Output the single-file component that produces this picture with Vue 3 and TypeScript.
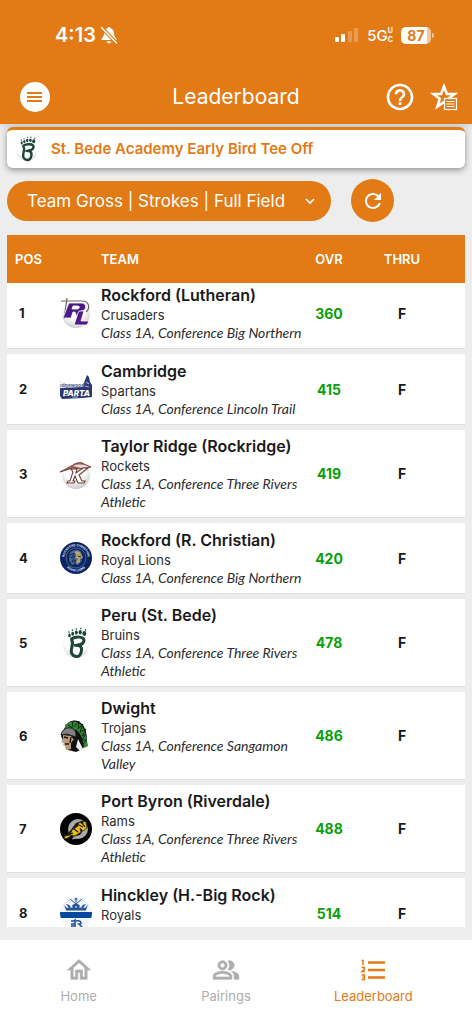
<script setup lang="ts">
import { onMounted, ref } from 'vue'

type Logo = 'rl' | 'spartans' | 'rocket' | 'lions' | 'bruins' | 'trojan' | 'rams' | 'royals'

interface Team {
  pos: number
  name: string
  mascot: string
  detail?: string
  score: number
  logo: Logo
}

const teams: Team[] = [
  { pos: 1, name: 'Rockford (Lutheran)', mascot: 'Crusaders', detail: 'Class 1A, Conference Big Northern', score: 360, logo: 'rl' },
  { pos: 2, name: 'Cambridge', mascot: 'Spartans', detail: 'Class 1A, Conference Lincoln Trail', score: 415, logo: 'spartans' },
  { pos: 3, name: 'Taylor Ridge (Rockridge)', mascot: 'Rockets', detail: 'Class 1A, Conference Three Rivers Athletic', score: 419, logo: 'rocket' },
  { pos: 4, name: 'Rockford (R. Christian)', mascot: 'Royal Lions', detail: 'Class 1A, Conference Big Northern', score: 420, logo: 'lions' },
  { pos: 5, name: 'Peru (St. Bede)', mascot: 'Bruins', detail: 'Class 1A, Conference Three Rivers Athletic', score: 478, logo: 'bruins' },
  { pos: 6, name: 'Dwight', mascot: 'Trojans', detail: 'Class 1A, Conference Sangamon Valley', score: 486, logo: 'trojan' },
  { pos: 7, name: 'Port Byron (Riverdale)', mascot: 'Rams', detail: 'Class 1A, Conference Three Rivers Athletic', score: 488, logo: 'rams' },
  { pos: 8, name: 'Hinckley (H.-Big Rock)', mascot: 'Royals', score: 514, logo: 'royals' },
]

const view = ref('Team Gross | Strokes | Full Field')
const list = ref<HTMLElement | null>(null)

onMounted(() => {
  if (list.value) list.value.scrollTop = 17
})
</script>

<template>
  <div class="screen">
    <svg class="defs" width="0" height="0" aria-hidden="true">
      <defs>
        <radialGradient id="ball" cx="0.45" cy="0.3" r="0.75">
          <stop offset="0.5" stop-color="#fff" />
          <stop offset="1" stop-color="#c4c4c4" />
        </radialGradient>
        <radialGradient id="soft-ball" cx="0.5" cy="0.25" r="0.8">
          <stop offset="0.6" stop-color="#fff" />
          <stop offset="1" stop-color="#d6d6d6" />
        </radialGradient>
        <clipPath id="disc"><circle cx="16" cy="16" r="16" /></clipPath>
        <symbol id="bear-paw" viewBox="0 0 32 32">
          <circle cx="16" cy="18" r="13" fill="url(#soft-ball)" />
          <g fill="#1e4536">
            <ellipse cx="9.500" cy="8.500" rx="1.300" ry="1.900" />
            <ellipse cx="12.700" cy="6.800" rx="1.400" ry="2" />
            <ellipse cx="16.300" cy="5.600" rx="1.500" ry="2.100" />
            <ellipse cx="20.200" cy="5.200" rx="1.600" ry="2.200" />
            <ellipse cx="24.300" cy="6.500" rx="1.900" ry="2.400" />
            <path d="M8 5.500l1-2 .6 2.500zM11.500 3.700l1-2 .6 2.500zM15.500 2.500l1-2 .6 2.500zM20 2l1-2 .6 2.500zM24.500 3.500l1.500-2 .2 2.500z" />
          </g>
          <path d="M11.500 12c4-3 13-2.500 12.500 1.500-.3 3-3.500 4.500-7 5 3-.6 5 1.500 4.500 5-.5 4-2.500 6.500-5.500 6-4-.5-5.500-4-4.500-8 .8-3 2-5.500 0-9.500z" fill="#fff" stroke="#1e4536" stroke-width="3" stroke-linejoin="round" />
          <path d="M14 18.500c2-.5 5-.5 7-1.500" fill="none" stroke="#1e4536" stroke-width="2.500" />
        </symbol>
      </defs>
    </svg>

    <header class="top">
      <div class="status">
        <div class="clock">
          <span>4:13</span>
          <svg width="18" height="18" viewBox="0 0 18 18" aria-hidden="true">
            <path d="M9 1c-.9 0-1.400.6-1.500 1.300C5 3 4 5 4 7.500 4 10.500 2.500 11.500 1.500 13v1h15v-1c-1-1.500-2.500-2.500-2.500-5.500C14 5 13 3 10.500 2.300 10.400 1.600 9.900 1 9 1zM6.800 15.200c.2 1.300 1 2.100 2.200 2.100s2-.8 2.200-2.100z" fill="#fff" />
            <path d="M1.500 1.500L16.500 17" stroke="#e27a16" stroke-width="3.600" />
            <path d="M1.500 1.500L16.500 17" stroke="#fff" stroke-width="1.400" stroke-linecap="round" />
          </svg>
        </div>
        <div class="signals">
          <svg width="24" height="16" viewBox="0 0 24 16" fill="#fff" aria-hidden="true">
            <rect x="0" y="10" width="4" height="5" rx="1" />
            <rect x="6" y="7" width="4" height="8" rx="1" />
            <rect x="13" y="4" width="4" height="11" rx="1" opacity="0.25" />
            <rect x="19" y="1" width="4" height="14" rx="1" opacity="0.25" />
          </svg>
          <span class="network">5G<span class="uc"><span>U</span><span>C</span></span></span>
          <span class="battery">87</span>
          <span class="battery-tip"></span>
        </div>
      </div>
      <div class="bar">
        <button class="menu" aria-label="Menu">
          <svg width="16" height="12" viewBox="0 0 16 12" aria-hidden="true"><path d="M0 2h15M0 6h15M0 10h15" stroke="#e27a16" stroke-width="1.800" /></svg>
        </button>
        <h1>Leaderboard</h1>
        <div class="actions">
          <button class="plain" aria-label="Help">
            <svg width="32" height="32" viewBox="0 0 24 24" fill="#fff" aria-hidden="true"><path d="M11 18h2v-2h-2v2zm1-16C6.480 2 2 6.480 2 12s4.480 10 10 10 10-4.480 10-10S17.520 2 12 2zm0 18c-4.410 0-8-3.590-8-8s3.590-8 8-8 8 3.590 8 8-3.590 8-8 8zm0-14c-2.210 0-4 1.790-4 4h2c0-1.100.9-2 2-2s2 .9 2 2c0 2-3 1.750-3 5h2c0-2.250 3-2.500 3-5 0-2.210-1.790-4-4-4z" /></svg>
          </button>
          <button class="plain" aria-label="Favorites list">
            <svg width="28" height="28" viewBox="0 0 28 28" aria-hidden="true">
              <path d="M14 3.500l2.900 7.500h7.600l-6.200 4.800 2.300 7.700-6.600-4.500-6.600 4.500 2.300-7.700L3.500 11h7.600z" fill="none" stroke="#fff" stroke-width="2.600" />
              <rect x="14.500" y="15.500" width="12" height="11" fill="#e27a16" stroke="#fff" stroke-width="1.200" />
              <path d="M16.500 18.500h8M16.500 21h8M16.500 23.500h8" stroke="#fff" stroke-width="1.200" />
            </svg>
          </button>
        </div>
      </div>
    </header>

    <main class="content">
      <section class="event">
        <svg width="24" height="26" viewBox="2 0 28 32" aria-hidden="true"><use href="#bear-paw" width="32" height="32" /></svg>
        <h2>St. Bede Academy Early Bird Tee Off</h2>
      </section>

      <div class="filters">
        <div class="picker">
          <select v-model="view" aria-label="Leaderboard view">
            <option>Team Gross | Strokes | Full Field</option>
          </select>
          <svg class="chevron" width="10" height="8" viewBox="0 0 10 8" aria-hidden="true"><path d="M1 2l4 4 4-4" fill="none" stroke="#fff" stroke-width="1.600" /></svg>
        </div>
        <button class="refresh" aria-label="Refresh">
          <svg width="24" height="24" viewBox="0 0 24 24" fill="#fff" aria-hidden="true"><path d="M17.650 6.350C16.200 4.900 14.210 4 12 4c-4.420 0-7.990 3.580-7.990 8s3.570 8 7.990 8c3.730 0 6.840-2.550 7.730-6h-2.080c-.82 2.330-3.040 4-5.650 4-3.310 0-6-2.690-6-6s2.690-6 6-6c1.660 0 3.140.69 4.220 1.780L13 11h7V4l-2.350 2.350z" /></svg>
        </button>
      </div>

      <div ref="list" class="list">
        <table>
          <thead>
            <tr>
              <th class="pos">POS</th>
              <th class="logo-col"></th>
              <th class="team">TEAM</th>
              <th class="ovr">OVR</th>
              <th class="thru">THRU</th>
            </tr>
          </thead>
          <tbody>
            <tr v-for="t in teams" :key="t.pos">
              <td class="pos">{{ t.pos }}</td>
              <td class="logo-col">
                <svg width="32" height="32" viewBox="0 0 32 32" aria-hidden="true">
                  <g v-if="t.logo === 'rl'">
                    <circle cx="16" cy="17" r="14" fill="url(#ball)" />
                    <path d="M7 1L4 22M1 4h21c8 0 8 8 4 11" fill="none" stroke="#666" stroke-width="1.200" />
                    <path d="M9 6h13c5 0 5 8-1 8l1 6h-5l-2-5h-2l-2 6H3L8 8zM13 9l-1 3h5c3 0 3-3 1-3z" fill="#4c1a86" stroke="#fff" stroke-width="0.800" fill-rule="evenodd" />
                    <path d="M19 14h5l-3 10h8l-2 4H14l4-12z" fill="#4c1a86" stroke="#fff" stroke-width="0.800" />
                  </g>
                  <g v-else-if="t.logo === 'spartans'">
                    <path d="M23 13l2-6 2-5 2 2 1 5 2 3v5l-9-2z" fill="#283a70" />
                    <path d="M26 9l3 2M25 13l4 1" stroke="#a6adc7" stroke-width="1.200" />
                    <text x="0" y="14" class="mark ridge">idgewood</text>
                    <path d="M0 15l22-1 10 2v8l-9 1-21 1-2-3z" fill="#283a70" />
                    <text x="3" y="23" class="mark sparta">PARTA</text>
                    <path d="M3 23l5-1M12 24h6M21 23l6-1" stroke="#fff" stroke-width="0.600" />
                  </g>
                  <g v-else-if="t.logo === 'rocket'">
                    <circle cx="16" cy="17" r="14" fill="url(#ball)" />
                    <path d="M0 14l13-7c4-3 9-3 11-1l7 3-10 2-8-1z" fill="#b1665f" stroke="#602f2d" stroke-width="0.800" />
                    <path d="M13 8c5-2 10-2 16 1l-8 1z" fill="#ddd" />
                    <path d="M11 11h6l-1 4 7-5h5l-9 7 3 6h3l-1 2h-6l-3-7-2 5h2l-1 2H7l1-2h2l3-9z" fill="#fff" stroke="#713c37" stroke-width="1.100" />
                  </g>
                  <g v-else-if="t.logo === 'lions'">
                    <circle cx="16" cy="16" r="16" fill="#0c2461" />
                    <circle cx="16" cy="16" r="10" fill="none" stroke="#50739f" stroke-width="0.800" />
                    <path id="arc-top" d="M6 22a11.700 11.700 0 1 1 20 0" fill="none" />
                    <path id="arc-bottom" d="M3.500 21a13.500 13.500 0 0 0 25 0" fill="none" />
                    <text class="mark ring"><textPath href="#arc-top" startOffset="50%" text-anchor="middle">ROCKFORD CHRISTIAN</textPath></text>
                    <text class="mark ring"><textPath href="#arc-bottom" startOffset="50%" text-anchor="middle">ROYAL LIONS</textPath></text>
                    <path d="M10 11c3-4 9-4 11-1l2 5-2 1 1 3-4 4-3-1-3 1-3-5z" fill="#47698f" />
                    <path d="M14 10c4-2 7 0 7 3l2 3-3 1v3l-3 2-1-3 2-2-4-2 3-1z" fill="#b9a16b" />
                    <path d="M10 13l5-2-4 5 4-2-3 6 4-2-2 5M18 14l3 1" stroke="#122c55" fill="none" />
                  </g>
                  <use v-else-if="t.logo === 'bruins'" href="#bear-paw" />
                  <g v-else-if="t.logo === 'trojan'">
                    <path d="M5 7C9-1 18-1 22 4c5 5 5 14 5 20l-5 5-6 3-8-2-3-5-4-9z" fill="#111" />
                    <path d="M5 5C12-1 21 1 24 10c2 5 3 10 4 16l-4 2c-1-8-3-15-8-18-3-1-7-1-11 0z" fill="#318336" />
                    <path d="M8 5l4 3 1-7M14 7l5-6-1 8 5-5-3 8 6-3-4 7 4-2-4 6 5 0-4 4" fill="none" stroke="#112c13" />
                    <path d="M1 15C2 9 8 6 13 9c3 2 3 5 3 8L7 14z" fill="#818181" stroke="#222" />
                    <path d="M3 15l8 1 3 4-3 3v6l-5 1-1-4-2-1 1-2-3-1 2-2z" fill="#bc9a7a" />
                    <path d="M4 17l4 1M5 24h4M11 17l-1 6M12 22l4-2" fill="none" stroke="#1b1715" stroke-width="1.400" />
                    <path d="M18 19l5 10-3 2-4-4z" fill="#eee" />
                  </g>
                  <g v-else-if="t.logo === 'rams'">
                    <circle cx="16" cy="16" r="16" fill="#000" />
                    <circle cx="18" cy="16" r="10" fill="#a9a9a9" />
                    <path d="M4 24l6-6 6-8 8-3 4 7-4 2-4 6-8 2-5 2z" fill="#171717" />
                    <path d="M5 23l5-1 2-5 6-4 1-4 4 2v-3l3 1 1 6-4 3-3-3 1 4-6 4-4-1-3 3-4 1z" fill="#e9b91c" stroke="#241e0a" stroke-width="0.700" />
                    <path d="M19 12l4 2M14 16l4 3M22 10l3 4M10 21l3-1" stroke="#1c1606" stroke-width="1.200" />
                    <path d="M12 26l9-2" stroke="#aaa" />
                  </g>
                  <g v-else clip-path="url(#disc)">
                    <rect width="32" height="32" fill="#f3f5f8" />
                    <path d="M3 5c1 3 2 5 6 6L6 7c3 0 5 3 7 4-2-3 0-4 3-4s5 1 3 4c2-1 4-4 7-4l-3 4c4-1 5-3 6-6l-3 8H6z" fill="#24569c" />
                    <path d="M10 2l6 5 6-5M16 1v5" stroke="#24569c" fill="none" />
                    <path d="M6 13h20" stroke="#24569c" stroke-width="1.200" />
                    <path d="M7 9v2M11 9v2M16 9v2M21 9v2M25 9v2" stroke="#f3f5f8" />
                    <circle cx="16" cy="2" r="1.500" fill="#477bb8" />
                    <path d="M0 15h32v6H0z" fill="#07499d" />
                    <path d="M11 24h3l1-1v6h-4M16 24c6-1 6 3 3 3l3 3M11 27h4" fill="none" stroke="#174d97" stroke-width="1.500" />
                  </g>
                </svg>
              </td>
              <td class="team">
                <div class="name">{{ t.name }}</div>
                <div class="mascot">{{ t.mascot }}</div>
                <div v-if="t.detail" class="detail">{{ t.detail }}</div>
                <div v-else class="detail">&nbsp;</div>
              </td>
              <td class="ovr">{{ t.score }}</td>
              <td class="thru">F</td>
            </tr>
          </tbody>
        </table>
      </div>
    </main>

    <nav class="tabs">
      <a href="#home">
        <svg width="28" height="28" viewBox="0 0 24 24" fill="currentColor" stroke="currentColor" stroke-width="0.500" aria-hidden="true"><path d="M12 5.690l5 4.500V18h-2v-6H9v6H7v-7.810l5-4.500M12 3L2 12h3v8h6v-6h2v6h6v-8h3L12 3z" /></svg>
        <span>Home</span>
      </a>
      <a href="#pairings">
        <svg width="28" height="28" viewBox="0 0 24 24" fill="currentColor" stroke="currentColor" stroke-width="0.500" aria-hidden="true"><path d="M16.670 13.130C18.040 14.060 19 15.320 19 17v3h4v-3c0-2.180-3.570-3.470-6.330-3.870zM15 12c2.210 0 4-1.790 4-4s-1.790-4-4-4c-.47 0-.91.1-1.330.24C14.500 5.270 15 6.580 15 8s-.5 2.730-1.330 3.760c.42.14.86.24 1.330.24zM9 12c2.210 0 4-1.790 4-4s-1.790-4-4-4-4 1.790-4 4 1.790 4 4 4zm0-6c1.100 0 2 .9 2 2s-.9 2-2 2-2-.9-2-2 .9-2 2-2zM9 13c-2.670 0-8 1.340-8 4v3h16v-3c0-2.660-5.330-4-8-4zm6 5H3v-.99C3.200 16.290 6.300 15 9 15s5.800 1.290 6 2v1z" /></svg>
        <span>Pairings</span>
      </a>
      <a href="#leaderboard" class="active" aria-current="page">
        <svg width="28" height="28" viewBox="0 0 28 28" fill="none" stroke="currentColor" aria-hidden="true">
          <path d="M9 6.500h17M9 14h17M9 21.500h17" stroke-width="2.600" />
          <path d="M2.500 4.500H4V9M2.500 11.500h3v1.800l-2.500 2.200h3M2.500 19h3v4.500h-3M3.500 21.300h2" stroke-width="1.400" />
        </svg>
        <span>Leaderboard</span>
      </a>
    </nav>
  </div>
</template>

<style>
body {
  background: #ededed;
}
</style>

<style scoped>
.screen {
  --orange: #e27a16;
  height: 100vh;
  display: flex;
  flex-direction: column;
  background: #ededed;
  font-family: Inter, Roboto, sans-serif;
  color: #1a1a1c;
}
.screen *,
.screen *::before {
  box-sizing: border-box;
}
.defs {
  position: absolute;
}
button {
  padding: 0;
  border: 0;
  display: grid;
  place-items: center;
  cursor: pointer;
}
.top {
  background: var(--orange);
  color: #fff;
  box-shadow: 0 2px 6px rgba(0, 0, 0, 0.12);
}
.status {
  height: 70px;
  display: flex;
  justify-content: space-between;
  align-items: center;
  padding: 0 38px 0 55px;
}
.clock,
.signals {
  display: flex;
  align-items: center;
}
.clock {
  gap: 4px;
  font-size: 20px;
  font-weight: 600;
}
.network {
  display: flex;
  align-items: center;
  margin: 0 8px;
  font-size: 15px;
  font-weight: 500;
}
.uc {
  display: flex;
  flex-direction: column;
  font-size: 7px;
  line-height: 9px;
  font-weight: 700;
}
.battery {
  width: 30px;
  height: 17px;
  border-radius: 5px;
  background: linear-gradient(90deg, #fff 87%, #f3c799 87%);
  color: var(--orange);
  font-size: 14px;
  line-height: 17px;
  font-weight: 700;
  text-align: center;
}
.battery-tip {
  width: 2px;
  height: 5px;
  margin-left: 1px;
  border-radius: 0 2px 2px 0;
  background: #f3c799;
}
.bar {
  height: 54px;
  display: grid;
  grid-template-columns: 1fr auto 1fr;
  align-items: center;
  padding: 0 14px;
}
.menu {
  width: 30px;
  height: 30px;
  margin-left: 6px;
  border-radius: 50%;
  background: #fff;
}
h1 {
  margin: 0;
  font-size: 21px;
  line-height: 28px;
  font-weight: 400;
}
.actions {
  display: flex;
  justify-content: flex-end;
  align-items: center;
  gap: 14px;
}
.plain {
  background: none;
}
.content {
  flex: 1;
  min-height: 0;
  display: flex;
  flex-direction: column;
  padding: 3px 7px 13px 7px;
}
.event {
  flex: none;
  height: 41px;
  display: flex;
  align-items: center;
  gap: 12px;
  padding: 0 8px;
  border-top: 3px solid var(--orange);
  border-radius: 6px;
  background: #fff;
  box-shadow: 0 2px 6px rgba(0, 0, 0, 0.4);
}
h2 {
  margin: 0;
  color: var(--orange);
  font-size: 15px;
  line-height: 20px;
  font-weight: 600;
}
.filters {
  display: flex;
  align-items: center;
  gap: 20px;
  margin: 11px 0 13px;
}
.picker {
  position: relative;
}
select {
  appearance: none;
  display: block;
  width: 324px;
  height: 40px;
  padding: 0 36px 0 20px;
  border: 0;
  border-radius: 20px;
  background: var(--orange);
  color: #fff;
  font-family: inherit;
  font-size: 17px;
}
.chevron {
  position: absolute;
  right: 16px;
  top: 16px;
  pointer-events: none;
}
.refresh {
  width: 43px;
  height: 43px;
  border-radius: 50%;
  background: var(--orange);
}
.list {
  flex: 1;
  min-height: 0;
  overflow-y: auto;
  scrollbar-width: none;
}
table {
  width: 100%;
  table-layout: fixed;
  border-collapse: separate;
  border-spacing: 0 6px;
}
th {
  position: sticky;
  top: 0;
  z-index: 1;
  height: 48px;
  padding: 0;
  background: var(--orange);
  color: #fff;
  font-size: 13px;
  font-weight: 600;
}
td {
  height: 70px;
  padding: 0;
  background: #fff;
  box-shadow: 0 1px 0 #dfdfdf;
}
.pos {
  width: 53px;
  text-align: left;
}
th.pos {
  padding-left: 8px;
}
td.pos {
  padding-left: 12px;
  font-size: 13px;
  font-weight: 700;
}
.logo-col {
  width: 41px;
}
.logo-col svg {
  display: block;
}
.team {
  text-align: left;
}
td.team {
  padding: 5px 0 6px;
}
.ovr {
  width: 50px;
  text-align: center;
}
.thru {
  width: 111px;
  padding-right: 15px;
  text-align: center;
}
td.ovr,
td.thru {
  font-size: 14px;
  font-weight: 700;
}
td.ovr {
  color: #08a008;
}
.name {
  font-size: 16px;
  line-height: 22px;
  font-weight: 600;
}
.mascot {
  font-size: 13px;
  line-height: 18px;
  color: #2c2c2e;
}
.detail {
  font-family: Lato, "Open Sans", sans-serif;
  font-size: 14px;
  line-height: 18px;
  font-style: italic;
  color: #2c2c2e;
}
.mark {
  font-family: Inter, sans-serif;
  font-weight: 800;
}
.ridge {
  fill: #65709a;
  font-size: 5px;
}
.sparta {
  fill: #fff;
  font-size: 8px;
  font-style: italic;
}
.ring {
  fill: #d5deeb;
  font-size: 3px;
}
.tabs {
  flex: none;
  height: 84px;
  display: grid;
  grid-template-columns: repeat(3, 1fr);
  padding: 16px 25px 0 5px;
  background: #fff;
}
.tabs a {
  display: flex;
  flex-direction: column;
  align-items: center;
  gap: 3px;
  color: #adadad;
  font-size: 13px;
  line-height: 18px;
  text-decoration: none;
}
.tabs .active {
  color: var(--orange);
}
</style>
